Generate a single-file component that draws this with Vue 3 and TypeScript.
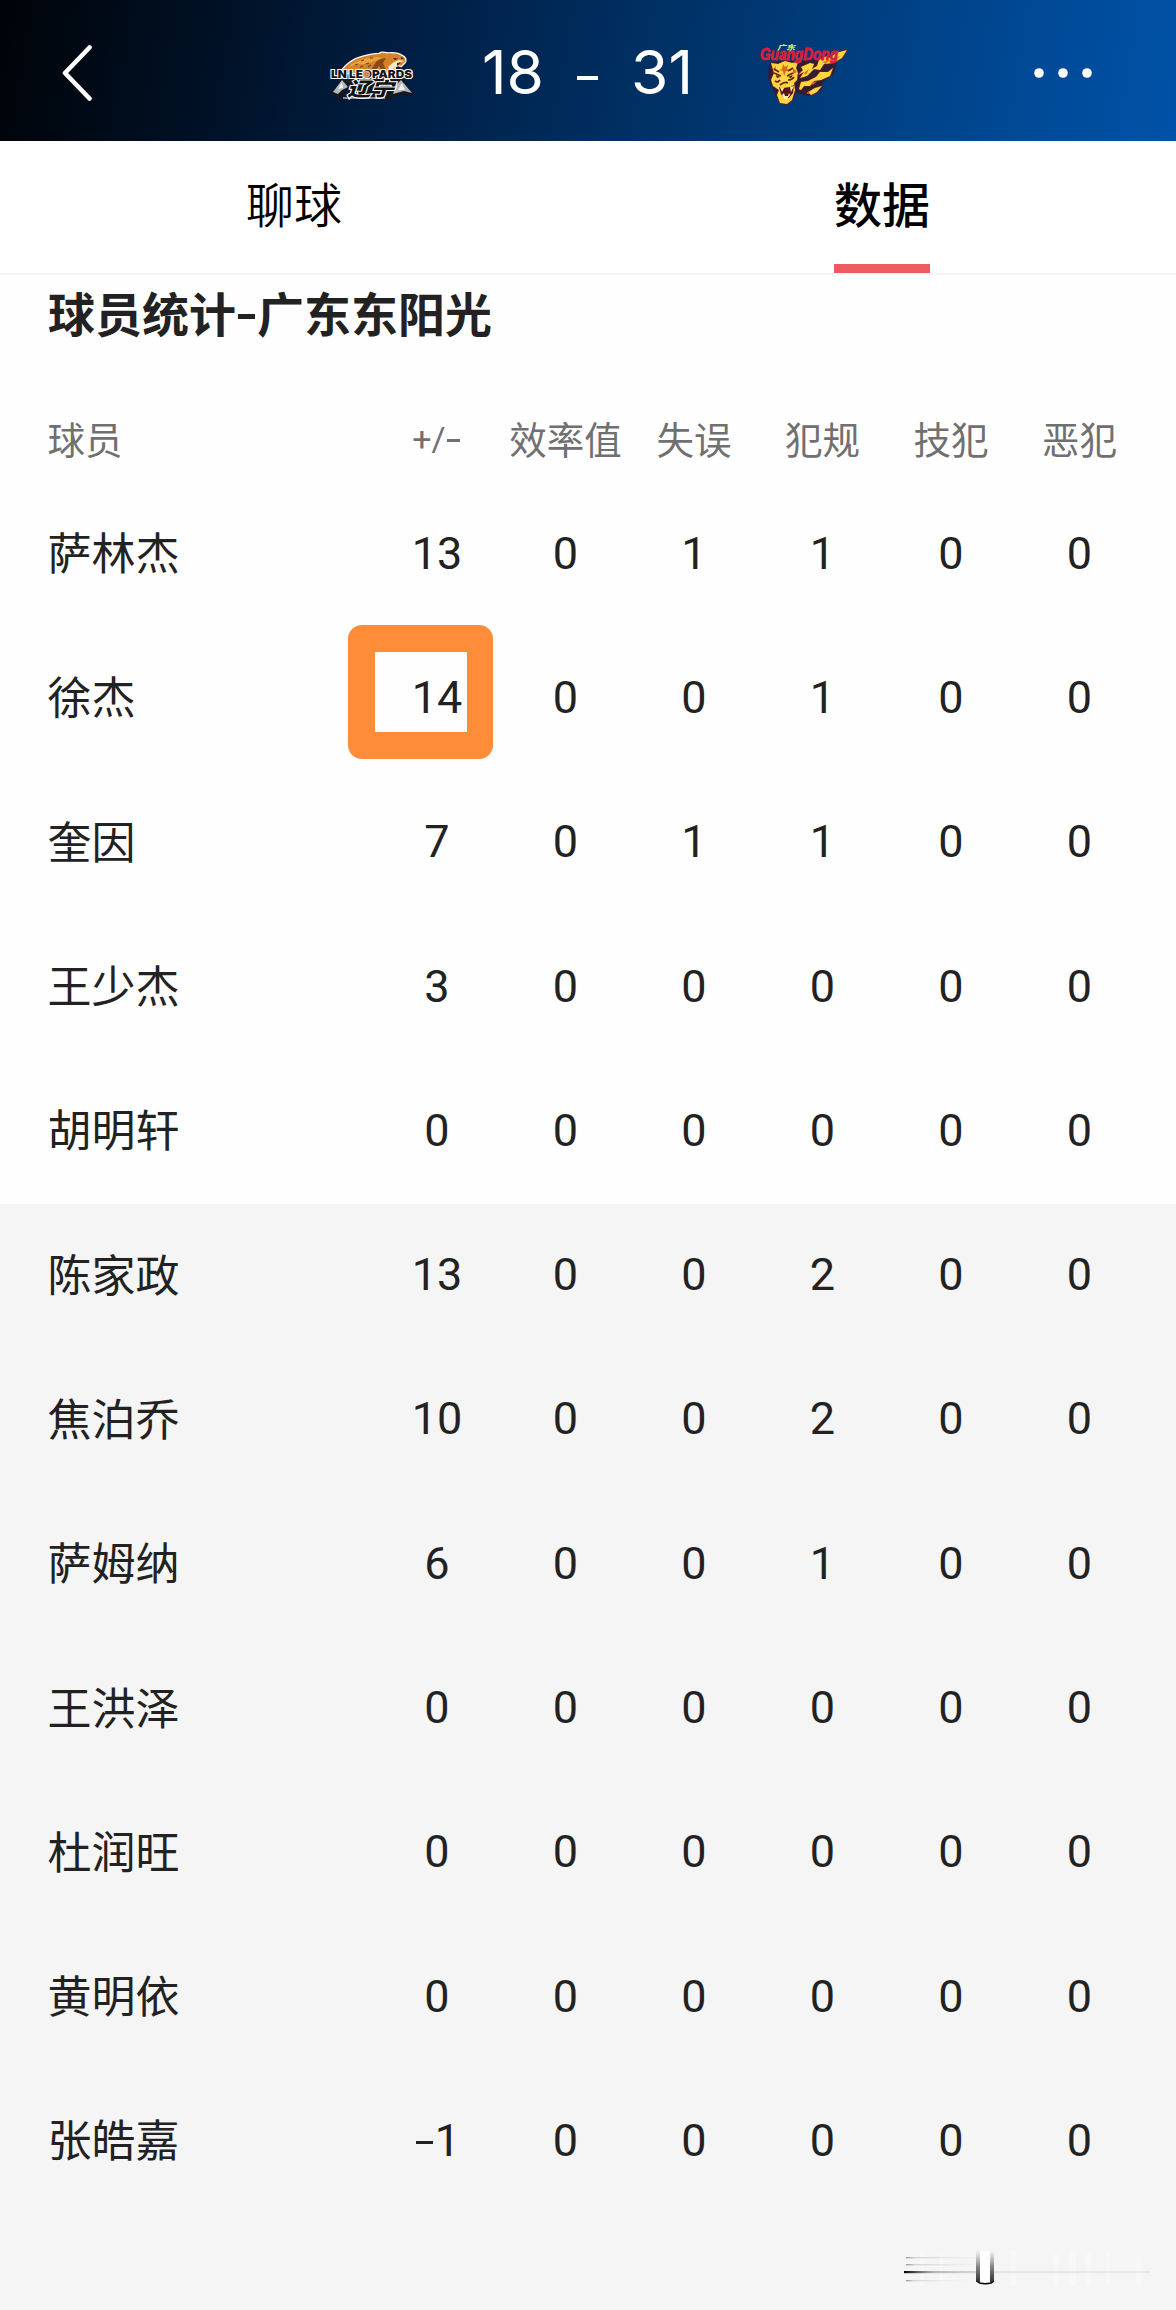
<script setup lang="ts">
interface Player {
  name: string;
  stats: number[];
  marked?: boolean;
}

const columns = ['+/-', '效率值', '失误', '犯规', '技犯', '恶犯'];

const starters: Player[] = [
  { name: '萨林杰', stats: [13, 0, 1, 1, 0, 0] },
  { name: '徐杰', stats: [14, 0, 0, 1, 0, 0], marked: true },
  { name: '奎因', stats: [7, 0, 1, 1, 0, 0] },
  { name: '王少杰', stats: [3, 0, 0, 0, 0, 0] },
  { name: '胡明轩', stats: [0, 0, 0, 0, 0, 0] }
];

const bench: Player[] = [
  { name: '陈家政', stats: [13, 0, 0, 2, 0, 0] },
  { name: '焦泊乔', stats: [10, 0, 0, 2, 0, 0] },
  { name: '萨姆纳', stats: [6, 0, 0, 1, 0, 0] },
  { name: '王洪泽', stats: [0, 0, 0, 0, 0, 0] },
  { name: '杜润旺', stats: [0, 0, 0, 0, 0, 0] },
  { name: '黄明依', stats: [0, 0, 0, 0, 0, 0] },
  { name: '张皓嘉', stats: [-1, 0, 0, 0, 0, 0] }
];

const groups = [
  { key: 'starters', players: starters },
  { key: 'bench', players: bench }
];
</script>

<template>
  <div class="page">
    <header class="header">
      <svg class="back" viewBox="0 0 30 60" fill="none" stroke="#fff" stroke-width="4.6" stroke-linecap="round" stroke-linejoin="round">
        <path d="M27.5 4.5 3 30l24.5 25.5" />
      </svg>

      <svg class="logo logo--home" viewBox="0 0 88 54">
        <path d="M3 43 13 26h62l10 17-16 1-6 3H12Z" fill="#14181f" />
        <path d="m5 40 9-12 6 7-6 3-4 4Zm60 2 3-9 5-5 11 13-8-2Z" fill="#b4b8bc" />
        <path d="m10 37 4-7 1 6Zm60 1 4-7 3 7Z" fill="#f1f1f1" />
        <path d="M13.500 19C19 12 26 7 34 5c7-2 12-3 17-3 3-2 6-1 8-.5 6-.5 12 0 15 2.500 3 1 4 4 3 6l-4 4-4-2-3 3 2 6H14Z" fill="#d4832a" stroke="#fff" stroke-width="2.600" paint-order="stroke" />
        <path d="M20 15C28 8 39 6 50 5l6 2c-9 1-12 4-20 5-6 0-10 1-16 3Z" fill="#eea23c" />
        <path d="M48 10c3-3 6-4 10-4l-3 5 3 7-4 2-3-6-4 5-4-1Z" fill="#8a4a18" />
        <path d="m27 13 3-1m3-3 3-1m2 4 3-1m1-5 3 0M32 15l3-1m5 1 3-2" stroke="#7b4016" stroke-width="1.200" />
        <path d="m65 6 5 .5-3 1.500Zm8-1 3 2-3 0Z" fill="#311a0d" />
        <path d="m66 10 5-2 5 1-4 2-1 3-5 2-4 3-2-4Z" fill="#f5e8cf" />
        <path d="m69 11 4-1-2 3-2 1Z" fill="#7b1d12" />
        <text class="wordmark" x="3" y="26" textLength="81" lengthAdjust="spacingAndGlyphs">LN LEOPARDS</text>
        <circle cx="38.500" cy="22.300" r="3.300" fill="#d98256" stroke="#f3cdb0" stroke-width=".7" />
        <text class="wordmark-cn" x="19" y="44" textLength="47" lengthAdjust="spacingAndGlyphs">辽宁</text>
        <path d="M15 46h42" stroke="#fff" stroke-width="1" />
      </svg>

      <div class="score">
        <span class="score-home">18</span>
        <i class="dash"></i>
        <span class="score-away">31</span>
      </div>

      <svg class="logo logo--away" viewBox="0 0 90 64">
        <path d="m10 22 8-4 60-2-3 15-11 8-2 9-13 5-12-3-3 7-5 5-8-1-5-10-4-9-3-8Z" fill="#3a1626" opacity=".8" />
        <g fill="#ffd63f" stroke="#6b1d1c" stroke-width="1.400" paint-order="stroke" stroke-linejoin="round">
          <path d="m12 20 7 1 7-3 7 2 6-1-2 6 2 5-1 7-3 3 1 7-3 10-5 4-7-1-3-8 2-5-6-4-2-6 3-7Z" />
          <path d="m39 32 5-5-2-3 9-4 4 1-2 5 5-3 2-6 8-4 3 2 6-5 11-3-5 8-9 5-9 1-4 6-6-1-7 7-7 2 4-6Z" />
          <path d="m40 46 2-7 7-1 8-4 4-5 8 0 5-4-3 8-9 4-7 1-4 5-6 0-3 4Z" />
          <path d="m49 49 7-4 7-2-5 6-6 3Z" />
        </g>
        <g fill="#dd6a20">
          <path d="m24 21 2 3 3-2-1 4 3 1-4 1-2 5-1-5-4-1 3-1Zm10 4 4 4-4 2Zm-20 1 3-3-1 5Z" />
          <path d="m45 30 5-4-3 6Zm19-11 7-2-5 4Zm-12 21 6-2-4 4Zm-5 10 5-2-3 3Zm29-35 5-2-4 4Z" />
        </g>
        <path d="m15 30 7 3m6 0 6-3M16 38q3 2 5-1m8 0q4 0 6-3m-20-8 5 3m9-1 5-3M21 42q5-4 8-2" fill="none" stroke="#6b1d1c" stroke-width="1.700" />
        <path d="m17 32 4 2-3 1Zm12 2 5-2-2 3Z" fill="#2a1011" />
        <path d="m20 44 4 1 7-1 4-2-1 8-4 5-5 0-3-4Z" fill="#58141b" />
        <path d="m21 44 2 5 2-4Zm10 0 1 5 3-6Zm-8 8 2-2 1 3 3 0 1-3 1 2-3 4-3 0Z" fill="#fff0a2" />
        <text class="gd" x="1" y="17" textLength="78" lengthAdjust="spacingAndGlyphs">GuangDong</text>
        <text class="gd-cn" x="18" y="6.500" textLength="18" lengthAdjust="spacingAndGlyphs">广东</text>
      </svg>

      <svg class="more" viewBox="0 0 58 10" fill="#fff">
        <circle cx="5" cy="5" r="4.8" />
        <circle cx="29" cy="5" r="4.8" />
        <circle cx="53" cy="5" r="4.8" />
      </svg>
    </header>

    <nav class="tabs">
      <a class="tab"><span>聊球</span></a>
      <a class="tab tab--active"><span>数据</span></a>
    </nav>

    <h2 class="title">球员统计<span class="hyphen"></span>广东东阳光</h2>

    <div class="row row--head">
      <span>球员</span>
      <span v-for="column in columns" :key="column" :class="['cell', { 'cell--sign': column === '+/-' }]">
        <template v-if="column === '+/-'">+/<i class="minus"></i></template>
        <template v-else>{{ column }}</template>
      </span>
    </div>

    <section v-for="group in groups" :key="group.key" :class="['group', `group--${group.key}`]">
      <div v-for="player in group.players" :key="player.name" class="row">
        <span class="name">{{ player.name }}</span>
        <span v-for="(value, index) in player.stats" :key="index" class="cell">
          <i v-if="player.marked && index === 0" class="marker"></i>
          <template v-if="value < 0"><i class="minus"></i>{{ -value }}</template>
          <template v-else>{{ value }}</template>
        </span>
      </div>
    </section>

    <footer class="footer">
      <svg class="watermark" viewBox="0 0 250 44">
        <defs>
          <linearGradient id="line" x1="0" x2="1">
            <stop offset="0" stop-color="#000" />
            <stop offset=".12" stop-color="#999" stop-opacity=".7" />
            <stop offset=".4" stop-color="#ccc" stop-opacity=".4" />
            <stop offset="1" stop-color="#ddd" stop-opacity=".5" />
          </linearGradient>
          <linearGradient id="faint" x1="0" x2="1">
            <stop offset="0" stop-color="#999" />
            <stop offset=".1" stop-color="#d4d4d4" />
            <stop offset="1" stop-color="#eee" stop-opacity="0" />
          </linearGradient>
          <linearGradient id="post" x1="0" x2="0" y1="0" y2="1">
            <stop offset="0" stop-color="#aaa" stop-opacity="0" />
            <stop offset=".5" stop-color="#888" />
            <stop offset="1" stop-color="#333" />
          </linearGradient>
        </defs>
        <g fill="#fff" opacity=".35">
          <rect x="16" y="4" width="4" height="34" />
          <rect x="36" y="6" width="3" height="30" />
          <rect x="107" y="2" width="5" height="36" />
          <rect x="150" y="6" width="4" height="32" />
          <rect x="165" y="4" width="7" height="34" />
          <rect x="182" y="6" width="5" height="32" />
          <rect x="202" y="3" width="4" height="34" />
          <rect x="232" y="8" width="5" height="28" />
        </g>
        <rect x="2" y="9" width="90" height="1.4" fill="url(#faint)" />
        <rect x="2" y="16" width="90" height="1.4" fill="url(#faint)" />
        <rect x="0" y="23" width="246" height="2.2" fill="url(#line)" />
        <rect x="2" y="32" width="70" height="1.4" fill="url(#faint)" />
        <rect x="76" y="3" width="11" height="32" fill="#fff" />
        <rect x="72" y="2" width="4" height="32" fill="url(#post)" />
        <rect x="86" y="2" width="4" height="32" fill="url(#post)" />
        <path d="M72 33q9 4 18.500 0-2 3.500-9 3.500T72 33Z" fill="#000" />
      </svg>
    </footer>
  </div>
</template>

<style>
body {
  margin: 0;
  background: #fff;
}
</style>

<style scoped>
.page {
  display: flex;
  flex-direction: column;
  width: 1176px;
  height: 2310px;
  overflow: hidden;
  background: #fefefe;
  color: #222;
  font-family: Roboto, 'Noto Sans CJK SC', sans-serif;
}

.header {
  display: grid;
  grid-template-columns: 328px 88px 343px 90px 1fr;
  align-items: center;
  height: 141px;
  padding-top: 4px;
  box-sizing: border-box;
  background: linear-gradient(100deg, #000308 0%, #001228 20%, #002149 38%, #003267 57%, #004389 78%, #0052a8 100%);
}

.back {
  width: 30px;
  height: 60px;
  margin-left: 62px;
}

.logo {
  display: block;
  width: 100%;
  overflow: visible;
}

.logo--home {
  margin-top: 13px;
}

.logo--away {
  margin-top: 5px;
}

.wordmark {
  font: 900 10.500px Inter, sans-serif;
  fill: #151515;
  stroke: #fff;
  stroke-width: 2px;
  paint-order: stroke;
}

.wordmark-cn {
  font: italic 900 19px 'Noto Sans CJK SC', sans-serif;
  fill: #111;
  stroke: #fff;
  stroke-width: 2px;
  paint-order: stroke;
}

.gd {
  font: italic 700 16px 'Liberation Sans', sans-serif;
  fill: #d8203e;
  stroke: #d8203e;
  stroke-width: 0.9px;
}

.gd-cn {
  font: italic 900 7px 'Noto Sans CJK SC', sans-serif;
  fill: #d6e95c;
}

.score {
  display: flex;
  align-items: center;
  justify-content: center;
  color: #fff;
  font: 400 60.500px/70px Inter, sans-serif;
}

.score span {
  margin-top: -2px;
}

.dash {
  width: 21px;
  height: 4px;
  margin: 10px 33px 0;
  background: #fff;
}

.more {
  width: 58px;
  height: 10px;
  margin-left: 185px;
}

.tabs {
  display: flex;
  height: 132px;
  border-bottom: 2px solid #f4f4f4;
  background: #fff;
}

.tab {
  display: flex;
  flex: 1;
  justify-content: center;
  color: #000;
  font-family: 'Noto Sans CJK SC', sans-serif;
  font-size: 48px;
  font-weight: 350;
  line-height: 122px;
}

.tab span {
  height: 123px;
}

.tab--active {
  font-weight: 500;
}

.tab--active span {
  border-bottom: 9px solid #ed5b60;
}

.title {
  height: 76px;
  margin: 0;
  padding: 0 48px;
  font: 700 47px/73px 'Noto Sans CJK SC', sans-serif;
}

.hyphen {
  display: inline-block;
  width: 17px;
  height: 5px;
  margin: 0 2px 13px;
  background: currentColor;
  vertical-align: baseline;
}

.row {
  display: grid;
  grid-template-columns: 325.200px repeat(6, 128.500px);
  align-items: center;
  box-sizing: border-box;
  height: 144.300px;
  padding: 0 0 3px 47.500px;
  font-size: 45px;
}

.row--head {
  height: 131.500px;
  padding-top: 46px;
  padding-bottom: 5.500px;
  color: #707070;
  font-size: 37.500px;
}

.name {
  padding-bottom: 4px;
  font-size: 44px;
}

.cell {
  position: relative;
  text-align: center;
  white-space: nowrap;
}

.cell--sign {
  padding-top: 4px;
  font-size: 34px;
}

.minus {
  display: inline-block;
  width: 0.37em;
  height: 3px;
  margin: 0 0.05em 0.27em;
  background: currentColor;
}

.marker {
  position: absolute;
  top: 50%;
  left: -24.500px;
  width: 92px;
  height: 80px;
  border: 27px solid #ff8c38;
  border-right-width: 26px;
  border-radius: 14px;
  transform: translateY(-72px);
}

.group--bench {
  flex: 1;
  background: #f5f5f5;
}

.footer {
  display: flex;
  justify-content: flex-end;
  height: 62px;
  padding-right: 22px;
  background: #f5f5f5;
}

.watermark {
  width: 250px;
  height: 44px;
}
</style>
